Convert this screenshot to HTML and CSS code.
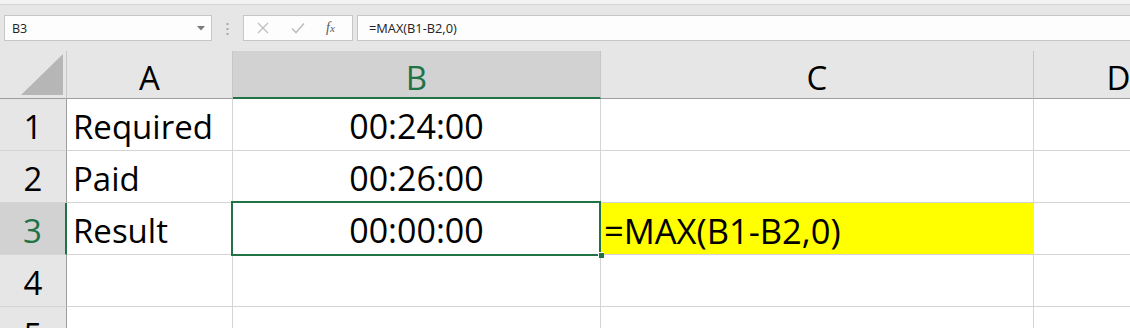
FILE: index.html
```html
<!DOCTYPE html>
<html>
<head>
	<title>Book1 - Excel</title>
	<link rel="stylesheet" href="styles.css">
</head>
<body>
	<div class="ribbon-edge"></div>
	<div class="formula-bar">
		<div class="name-box">
			<span>B3</span>
			<svg class="caret" width="8" height="5" viewBox="0 0 8 5"><polygon points="0,0 8,0 4,4.5" fill="#7a7a7a"/></svg>
		</div>
		<svg class="grip" width="3" height="12" viewBox="0 0 3 12">
			<rect x="0.5" y="0" width="2" height="2" fill="#a6a6a6"/>
			<rect x="0.5" y="5" width="2" height="2" fill="#a6a6a6"/>
			<rect x="0.5" y="10" width="2" height="2" fill="#a6a6a6"/>
		</svg>
		<div class="fx-box">
			<svg width="12" height="12" viewBox="0 0 12 12"><path d="M1 1 L11 11 M11 1 L1 11" stroke="#bfbfbf" stroke-width="1.3" fill="none"/></svg>
			<svg width="14" height="12" viewBox="0 0 14 12"><path d="M1 6.5 L5 10.5 L13 1.5" stroke="#bfbfbf" stroke-width="1.6" fill="none"/></svg>
			<span class="fx"><i>f</i><i class="x">x</i></span>
		</div>
		<div class="formula-input">=MAX(B1-B2,0)</div>
	</div>

	<div class="sheet">
		<div class="hd corner">
			<svg width="42" height="41" viewBox="0 0 42 41"><polygon points="0,41 42,41 42,0" fill="#b6b6b6"/></svg>
		</div>
		<div class="hd col">A</div>
		<div class="hd col active-col">B</div>
		<div class="hd col">C</div>
		<div class="hd col">D</div>

		<div class="hd row">1</div>
		<div class="cell txt">Required</div>
		<div class="cell num">00:24:00</div>
		<div class="cell"></div>
		<div class="cell"></div>

		<div class="hd row">2</div>
		<div class="cell txt">Paid</div>
		<div class="cell num">00:26:00</div>
		<div class="cell"></div>
		<div class="cell"></div>

		<div class="hd row active-row">3</div>
		<div class="cell txt">Result</div>
		<div class="cell num selected">00:00:00</div>
		<div class="cell txt yellow">=MAX(B1-B2,0)</div>
		<div class="cell"></div>

		<div class="hd row">4</div>
		<div class="cell"></div>
		<div class="cell"></div>
		<div class="cell"></div>
		<div class="cell"></div>

		<div class="hd row">5</div>
		<div class="cell"></div>
		<div class="cell"></div>
		<div class="cell"></div>
		<div class="cell"></div>
	</div>
</body>
</html>
```

FILE: styles.css
```css
body{
  margin:0;
  width:1130px;
  height:328px;
  overflow:hidden;
  background:#ffffff;
  font-family:"Open Sans", "Liberation Sans", sans-serif;
}
.ribbon-edge{
  height:4px;
  background:#f3f3f3;
  border-bottom:1px solid #d4d4d4;
}
.formula-bar{
  height:46px;
  background:#e6e6e6;
  display:flex;
  align-items:flex-start;
  padding-top:10px;
  box-sizing:border-box;
  overflow:hidden;
}
.name-box{
  margin-left:4px;
  width:208px;
  height:26px;
  box-sizing:border-box;
  background:#fdfdfd;
  border:1px solid #c6c6c6;
  display:flex;
  align-items:center;
  justify-content:space-between;
  padding:0 6px 0 7px;
  font-size:12.5px;
  color:#222;
}
.caret{
  margin-top:1px;
}
.grip{
  margin:8px 0 0 14px;
}
.fx-box{
  margin-left:14px;
  width:110px;
  height:26px;
  box-sizing:border-box;
  background:#fdfdfd;
  border:1px solid #c6c6c6;
  display:flex;
  align-items:center;
  padding-left:13px;
  gap:22px;
}
.fx{
  font-family:"Liberation Serif", serif;
  font-size:14px;
  color:#595959;
  margin-left:-1px;
}
.fx .x{
  font-size:11px;
}
.formula-input{
  margin-left:4px;
  flex:1;
  height:26px;
  margin-right:-10px;
  box-sizing:border-box;
  background:#fdfdfd;
  border:1px solid #c6c6c6;
  padding-left:11px;
  font-size:12.8px;
  line-height:24px;
  color:#222;
}
.sheet{
  display:grid;
  grid-template-columns:67px 166px 368px 433px 170px;
  grid-template-rows:48px repeat(5, 52px);
  font-size:33px;
  color:#000;
}
.hd{
  background:#e6e6e6;
  box-sizing:border-box;
  display:flex;
  align-items:center;
  justify-content:center;
}
.col{
  border-right:1px solid #c6c6c6;
  border-bottom:1px solid #9e9e9e;
  padding-top:6px;
}
.corner{
  border-right:1px solid #c6c6c6;
  border-bottom:1px solid #9e9e9e;
  justify-content:flex-end;
  align-items:flex-end;
  padding:0 3px 3px 0;
}
.row{
  border-right:1px solid #9e9e9e;
  border-bottom:1px solid #d4d4d4;
  padding-top:3px;
}
.active-col{
  background:#d2d2d2;
  color:#217346;
  border-bottom:2px solid #217346;
}
.active-row{
  background:#d2d2d2;
  color:#217346;
  border-right:2px solid #217346;
}
.cell{
  box-sizing:border-box;
  border-right:1px solid #d4d4d4;
  border-bottom:1px solid #d4d4d4;
  display:flex;
  align-items:center;
  padding-top:3px;
  white-space:nowrap;
}
.txt{
  padding-left:6px;
}
.num{
  justify-content:center;
  font-size:34px;
}
.yellow{
  background:#ffff00;
  padding-left:3px;
  font-size:34.5px;
  border-right-color:#ffff00;
}
.selected{
  position:relative;
  z-index:2;
}
.selected::after{
  content:"";
  position:absolute;
  left:-2px;
  top:-2px;
  right:-1px;
  bottom:-2px;
  border:2px solid #217346;
}
.selected::before{
  content:"";
  position:absolute;
  right:-4px;
  bottom:-4px;
  width:5px;
  height:5px;
  background:#217346;
  border-left:1px solid #fff;
  border-top:1px solid #fff;
  z-index:3;
}
```
